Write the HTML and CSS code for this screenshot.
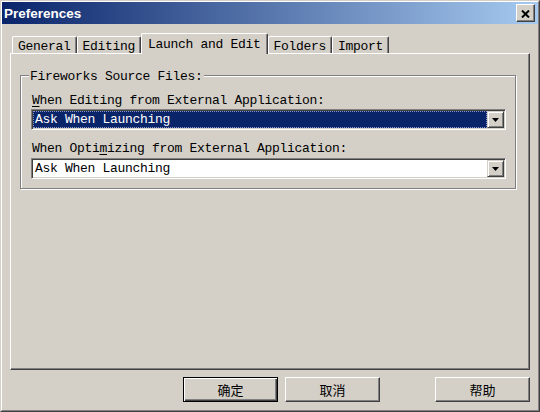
FILE: index.html
```html
<!DOCTYPE html>
<html>
<head>
<meta charset="utf-8">
<link rel="stylesheet" href="styles.css">
</head>
<body>
<div class="window">
  <div class="frame">
    <div class="titlebar">
      <span class="title">Preferences</span>
      <div class="close">
        <svg width="9" height="8" viewBox="0 0 9 8"><path d="M1 0.5 L8 7.5 M8 0.5 L1 7.5" stroke="#000" stroke-width="2" fill="none"/></svg>
      </div>
    </div>
    <div class="tabs">
      <div class="tab">General</div>
      <div class="tab">Editing</div>
      <div class="tab active">Launch and Edit</div>
      <div class="tab">Folders</div>
      <div class="tab">Import</div>
    </div>
    <div class="panel">
      <fieldset class="group">
        <legend>Fireworks Source Files:</legend>
        <div class="label first"><u>W</u>hen Editing from External Application:</div>
        <div class="combo">
          <div class="combo-value selected">Ask When Launching</div>
          <div class="combo-btn"><svg width="7" height="4" viewBox="0 0 7 4"><path d="M0 0 H7 L3.5 4 Z" fill="#000"/></svg></div>
        </div>
        <div class="label second">When Opti<u>m</u>izing from External Application:</div>
        <div class="combo combo2">
          <div class="combo-value">Ask When Launching</div>
          <div class="combo-btn"><svg width="7" height="4" viewBox="0 0 7 4"><path d="M0 0 H7 L3.5 4 Z" fill="#000"/></svg></div>
        </div>
      </fieldset>
    </div>
    <div class="buttons">
      <div class="btn default"><span>确定</span></div>
      <div class="btn cancel"><span>取消</span></div>
      <div class="btn help"><span>帮助</span></div>
    </div>
  </div>
</div>
</body>
</html>
```

FILE: styles.css
```css
html, body {
  margin: 0;
  padding: 0;
  background: #d4d0c8;
}

.window {
  width: 540px;
  height: 412px;
  box-sizing: border-box;
  border: 1px solid;
  border-color: #d4d0c8 #404040 #404040 #d4d0c8;
  background: #d4d0c8;
  font-family: "Liberation Mono", "Courier New", monospace;
  font-size: 13px;
  letter-spacing: -0.3px;
  color: #000;
}

.frame {
  height: 100%;
  box-sizing: border-box;
  border: 1px solid;
  border-color: #ffffff #808080 #808080 #ffffff;
}

.titlebar {
  height: 22px;
  display: flex;
  align-items: center;
  justify-content: space-between;
  padding: 0 3px 0 2px;
  background: linear-gradient(to right, #0a246a, #a6caf0);
}

.title {
  font-family: "Liberation Sans", Arial, sans-serif;
  font-weight: bold;
  font-size: 13.5px;
  letter-spacing: 0;
  color: #fff;
}

.close {
  width: 19px;
  height: 18px;
  box-sizing: border-box;
  background: #d4d0c8;
  border: 1px solid;
  border-color: #ffffff #404040 #404040 #ffffff;
  box-shadow: inset -1px -1px 0 #808080;
  display: flex;
  align-items: center;
  justify-content: center;
  padding-top: 1px;
}

.tabs {
  display: flex;
  align-items: flex-end;
  height: 20px;
  margin-top: 9px;
  padding-left: 10px;
  position: relative;
  z-index: 1;
}

.tab {
  height: 17px;
  box-sizing: border-box;
  padding: 3px 5px 0 5px;
  line-height: 14px;
  border-top: 1px solid #fff;
  border-left: 1px solid #fff;
  border-right: 1px solid #404040;
  box-shadow: inset -1px 0 0 #808080;
  border-radius: 2px 2px 0 0;
  background: #d4d0c8;
  white-space: nowrap;
}

.tab.active {
  height: 21px;
  margin-bottom: -1px;
  padding: 4px 6px 0 6px;
}

.panel {
  margin: 0 8px;
  height: 317px;
  box-sizing: border-box;
  border: 1px solid;
  border-color: #ffffff #404040 #404040 #ffffff;
  box-shadow: inset -1px -1px 0 #808080;
  padding-top: 13px;
}

.group {
  margin: 0 13px 0 9px;
  padding: 0 9px 9px 8px;
  border: 1px solid #808080;
  box-shadow: inset 1px 1px 0 #fff, 1px 1px 0 #fff;
  min-width: 0;
}

.group legend {
  padding: 3px 1px 0 1px;
  line-height: 14px;
  background: #d4d0c8;
}

.label {
  line-height: 14px;
  margin-left: 3px;
  white-space: nowrap;
}

.label u {
  text-decoration: underline;
  text-underline-offset: 2px;
}

.label.first {
  margin-top: 10px;
}

.label.second {
  margin-top: 12px;
}

.combo {
  margin: 1px 0 0 2px;
  height: 21px;
  box-sizing: border-box;
  border: 1px solid;
  border-color: #808080 #ffffff #ffffff #808080;
  box-shadow: inset 1px 1px 0 #404040, inset -1px -1px 0 #d4d0c8;
  padding: 1px;
  display: flex;
  background: #fff;
}

.combo2 {
  margin-top: 2px;
}

.combo-value {
  flex: 1;
  line-height: 17px;
  padding-left: 2px;
  white-space: nowrap;
}

.combo-value.selected {
  background: #0a246a;
  color: #fff;
  outline: 1px dotted #8a96c8;
  outline-offset: -1px;
}

.combo-btn {
  width: 17px;
  height: 17px;
  box-sizing: border-box;
  background: #d4d0c8;
  border: 1px solid;
  border-color: #d4d0c8 #404040 #404040 #d4d0c8;
  box-shadow: inset 1px 1px 0 #fff, inset -1px -1px 0 #808080;
  display: flex;
  align-items: center;
  justify-content: center;
}

.buttons {
  display: flex;
  justify-content: flex-end;
  margin-top: 7px;
  padding-right: 8px;
}

.btn {
  width: 95px;
  height: 25px;
  box-sizing: border-box;
  border: 1px solid;
  border-color: #ffffff #404040 #404040 #ffffff;
  box-shadow: inset -1px -1px 0 #808080;
  display: flex;
  align-items: center;
  justify-content: center;
  font-family: "Noto Sans CJK SC", sans-serif;
  font-size: 13px;
  letter-spacing: 0;
}

.btn.default {
  border: 1px solid #000;
  box-shadow: inset 1px 1px 0 #fff, inset -1px -1px 0 #404040, inset -2px -2px 0 #808080;
}

.btn.cancel {
  margin-left: 7px;
}

.btn.help {
  margin-left: 55px;
}
```
